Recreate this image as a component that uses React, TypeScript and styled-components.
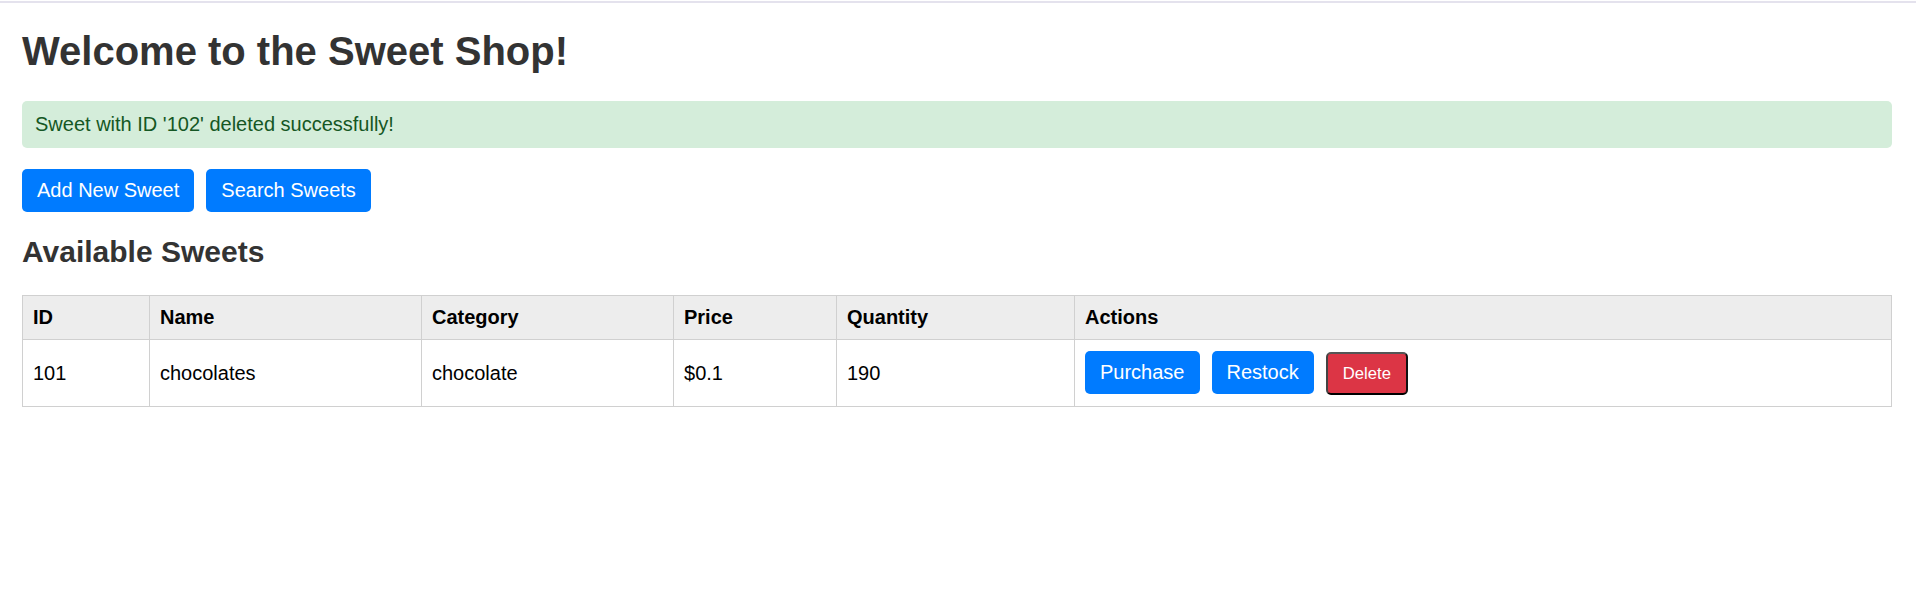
import styled, { createGlobalStyle } from "styled-components";

const GlobalStyle = createGlobalStyle`
  body {
    margin: 0;
    background: #fff;
    font-family: "Liberation Sans", Arial, sans-serif;
  }
`;

type Sweet = {
  id: string;
  name: string;
  category: string;
  price: number;
  quantity: number;
};

const sweets: Sweet[] = [
  { id: "101", name: "chocolates", category: "chocolate", price: 0.1, quantity: 190 },
];

const columns = [
  { label: "ID", width: 127 },
  { label: "Name", width: 272 },
  { label: "Category", width: 252 },
  { label: "Price", width: 163 },
  { label: "Quantity", width: 238 },
  { label: "Actions", width: undefined },
];

const App = () => {
  return (
    <>
      <GlobalStyle />
      <TopRule />
      <Page>
        <Title>Welcome to the Sweet Shop!</Title>
        <Alert>Sweet with ID '102' deleted successfully!</Alert>
        <Toolbar>
          <Button>Add New Sweet</Button>
          <Button>Search Sweets</Button>
        </Toolbar>
        <SectionTitle>Available Sweets</SectionTitle>
        <Table>
          <colgroup>
            {columns.map((c) => (
              <col key={c.label} style={c.width ? { width: c.width } : undefined} />
            ))}
          </colgroup>
          <thead>
            <tr>
              {columns.map((c) => (
                <HeadCell key={c.label}>{c.label}</HeadCell>
              ))}
            </tr>
          </thead>
          <tbody>
            {sweets.map((s) => (
              <tr key={s.id}>
                <Cell>{s.id}</Cell>
                <Cell>{s.name}</Cell>
                <Cell>{s.category}</Cell>
                <Cell>${s.price}</Cell>
                <Cell>{s.quantity}</Cell>
                <Cell>
                  <Actions>
                    <Button>Purchase</Button>
                    <Button>Restock</Button>
                    <DeleteButton>Delete</DeleteButton>
                  </Actions>
                </Cell>
              </tr>
            ))}
          </tbody>
        </Table>
      </Page>
    </>
  );
};

const TopRule = styled.div`
  height: 2px;
  margin-top: 1px;
  background: #e4e2ed;
`;

const Page = styled.div`
  padding: 0 24px 0 22px;
  display: flow-root;
`;

const Title = styled.h1`
  margin: 25px 0 27px;
  font-size: 40px;
  line-height: 46px;
  font-weight: bold;
  color: #333;
`;

const Alert = styled.div`
  padding: 12px 13px;
  border-radius: 5px;
  background: #d4edda;
  color: #155724;
  font-size: 20px;
  line-height: 23px;
  margin-bottom: 21px;
`;

const Toolbar = styled.div`
  display: flex;
  gap: 12px;
`;

const Button = styled.button`
  padding: 10px 15px;
  border: none;
  border-radius: 5px;
  background: #007bff;
  color: #fff;
  font-family: inherit;
  font-size: 20px;
  line-height: 23px;
  cursor: pointer;
`;

const DeleteButton = styled.button`
  padding: 10px 15px;
  border: 2px solid;
  border-color: #555 #111 #000 #444;
  border-radius: 5px;
  background: #dc3545;
  color: #fff;
  font-family: inherit;
  font-size: 16.67px;
  line-height: 19px;
  cursor: pointer;
`;

const SectionTitle = styled.h2`
  margin: 23px 0 26px;
  font-size: 30px;
  line-height: 34px;
  font-weight: bold;
  color: #333;
`;

const Table = styled.table`
  width: 100%;
  border-collapse: collapse;
  table-layout: fixed;
  font-size: 20px;
  line-height: 23px;
  color: #000;
`;

const HeadCell = styled.th`
  padding: 10px;
  border: 1px solid #d0d0d0;
  background: #ededed;
  text-align: left;
  font-weight: bold;
`;

const Cell = styled.td`
  padding: 11px 10px;
  border: 1px solid #d0d0d0;
  text-align: left;
  vertical-align: middle;
`;

const Actions = styled.div`
  display: flex;
  align-items: baseline;
  gap: 12px;
`;

export default App;
